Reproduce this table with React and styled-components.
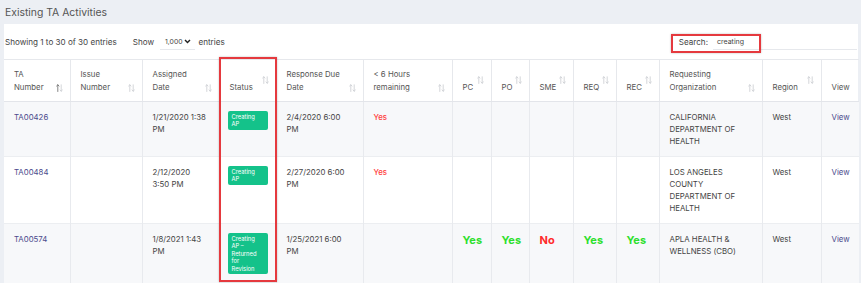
import React from 'react';
import styled, { createGlobalStyle } from 'styled-components';

const GlobalStyle = createGlobalStyle`
  html, body {
    margin: 0;
    padding: 0;
    background: #eceff4;
    font-family: Inter, "Open Sans", Arial, sans-serif;
    color: #444;
  }
`;

const Page = styled.div`
  width: 861px;
  height: 283px;
  overflow: hidden;
  background: #eceff4;
`;

const TitleBar = styled.div`
  height: 24px;
  padding-left: 5px;
  display: flex;
  align-items: center;
  font-size: 10.4px;
  color: #555;
`;

const Card = styled.div`
  margin-left: 4px;
  width: 854px;
  background: #fff;
`;

const Controls = styled.div`
  height: 35px;
  display: flex;
  align-items: center;
  padding: 0 1px;
  font-size: 8.1px;
  color: #444;
`;

const Info = styled.span`
  margin-right: 16px;
`;

const Select = styled.span`
  display: inline-flex;
  align-items: center;
  gap: 2px;
  margin: 0 3px 0 6px;
  padding: 0 4px 0 5px;
  height: 16px;
  font-size: 6.8px;
  border-bottom: 1px solid #e6e8ec;
`;

const SearchArea = styled.div`
  margin-left: auto;
  position: relative;
  display: flex;
  align-items: center;
`;

const SearchLabel = styled.span`
  margin-right: 5px;
`;

const SearchInput = styled.span`
  width: 140px;
  height: 15px;
  padding-left: 4px;
  display: flex;
  align-items: center;
  font-size: 7px;
  border-bottom: 1px solid #e6e8ec;
`;

const RedBox = styled.div`
  position: absolute;
  border: 2px solid #e5393e;
  box-shadow: 0 0 2px rgba(0, 0, 0, 0.25);
  pointer-events: none;
`;

const TableWrap = styled.div`
  position: relative;
`;

const Table = styled.table`
  width: 855px;
  table-layout: fixed;
  border-collapse: collapse;
  font-size: 7.8px;
`;

const Th = styled.th`
  height: 26px;
  padding: 8px 8px 7px 10px;
  vertical-align: bottom;
  text-align: left;
  font-weight: 400;
  line-height: 13px;
  color: #555;
  border-top: 1px solid #e6e8ec;
  border-bottom: 1px solid #e3e5ea;
  border-left: 1px solid #e6e8ec;
  &:first-child {
    border-left: none;
  }
`;

const HeadInner = styled.div`
  display: flex;
  justify-content: space-between;
  align-items: flex-end;
`;

const SortWrap = styled.span`
  display: flex;
  margin-right: -1px;
  margin-bottom: ${p => (p.$lifted ? '10px' : '2px')};
`;

const Tr = styled.tr`
  background: ${p => (p.$striped ? '#f7f8fa' : '#fff')};
`;

const Td = styled.td`
  padding: 9px 8px 9px 10px;
  vertical-align: top;
  line-height: 12px;
  color: #444;
  border-top: 1px solid #eceef1;
  border-left: 1px solid #e8eaee;
  &:first-child {
    border-left: none;
  }
`;

const Link = styled.span`
  color: #4b4a8c;
`;

const Flag = styled.span`
  display: block;
  color: ${p => (p.$ok ? '#2ee02e' : '#ff2a2a')};
  font-weight: 700;
  font-size: 11px;
  line-height: 14px;
`;

const Urgent = styled.span`
  color: #ff3c3c;
  font-weight: 500;
`;

const Badge = styled.span`
  display: block;
  width: 32px;
  margin-left: -2px;
  padding: 2px 4px;
  border-radius: 2px;
  background: #14c28a;
  color: #fff;
  font-size: 5.8px;
  line-height: 7.4px;
`;

const widths = [66, 72, 77, 57, 87, 89, 39, 38, 44, 43, 43, 103, 59, 38];

const headers = [
  { label: <>TA<br />Number</>, active: true },
  { label: <>Issue<br />Number</> },
  { label: <>Assigned<br />Date</> },
  { label: 'Status', lifted: true },
  { label: <>Response Due<br />Date</> },
  { label: <>&lt; 6 Hours<br />remaining</> },
  { label: 'PC', lifted: true },
  { label: 'PO', lifted: true },
  { label: 'SME', lifted: true },
  { label: 'REQ', lifted: true },
  { label: 'REC', lifted: true },
  { label: <>Requesting<br />Organization</> },
  { label: 'Region', lifted: true },
  { label: 'View', noSort: true },
];

const rows = [
  {
    id: 'TA00426',
    assigned: <>1/21/2020 1:38<br />PM</>,
    status: <>Creating<br />AP</>,
    due: <>2/4/2020 6:00<br />PM</>,
    urgent: true,
    flags: null,
    org: <>CALIFORNIA<br />DEPARTMENT OF<br />HEALTH</>,
  },
  {
    id: 'TA00484',
    assigned: <>2/12/2020<br />3:50 PM</>,
    status: <>Creating<br />AP</>,
    due: <>2/27/2020 6:00<br />PM</>,
    urgent: true,
    flags: null,
    org: <>LOS ANGELES<br />COUNTY<br />DEPARTMENT OF<br />HEALTH</>,
  },
  {
    id: 'TA00574',
    assigned: <>1/8/2021 1:43<br />PM</>,
    status: <>Creating<br />AP –<br />Returned<br />for<br />Revision</>,
    due: <>1/25/2021 6:00<br />PM</>,
    urgent: false,
    flags: [true, true, false, true, true],
    org: <>APLA HEALTH &amp;<br />WELLNESS (CBO)</>,
  },
];

function SortIcon({ active }) {
  return (
    <svg width="7" height="8" viewBox="0 0 7 8">
      <g fill="none" strokeWidth="0.8" strokeLinecap="round" strokeLinejoin="round">
        <path d="M1.8 7.5V0.8M0.6 2L1.8 0.8L3 2" stroke={active ? '#666' : '#c9ccd1'} />
        <path d="M5.2 0.8V7.2M4 6L5.2 7.2L6.4 6" stroke="#c9ccd1" />
      </g>
    </svg>
  );
}

function Chevron() {
  return (
    <svg width="7" height="5" viewBox="0 0 7 5">
      <path d="M1 1L3.5 3.6L6 1" fill="none" stroke="#222" strokeWidth="1.4" />
    </svg>
  );
}

export default function App() {
  return (
    <Page>
      <GlobalStyle />
      <TitleBar>Existing TA Activities</TitleBar>
      <Card>
        <Controls>
          <Info>Showing 1 to 30 of 30 entries</Info>
          <span>Show</span>
          <Select>1,000 <Chevron /></Select>
          <span>entries</span>
          <SearchArea>
            <SearchLabel>Search:</SearchLabel>
            <SearchInput>creating</SearchInput>
            <RedBox style={{ left: -8, top: 0, width: 86, height: 15 }} />
          </SearchArea>
        </Controls>
        <TableWrap>
          <Table>
            <colgroup>
              {widths.map((w, i) => <col key={i} style={{ width: w }} />)}
            </colgroup>
            <thead>
              <tr>
                {headers.map((h, i) => (
                  <Th key={i}>
                    <HeadInner>
                      <span>{h.label}</span>
                      {!h.noSort && (
                        <SortWrap $lifted={h.lifted}>
                          <SortIcon active={h.active} />
                        </SortWrap>
                      )}
                    </HeadInner>
                  </Th>
                ))}
              </tr>
            </thead>
            <tbody>
              {rows.map((r, i) => (
                <Tr key={r.id} $striped={i % 2 === 0}>
                  <Td><Link>{r.id}</Link></Td>
                  <Td />
                  <Td>{r.assigned}</Td>
                  <Td><Badge>{r.status}</Badge></Td>
                  <Td>{r.due}</Td>
                  <Td>{r.urgent && <Urgent>Yes</Urgent>}</Td>
                  {[0, 1, 2, 3, 4].map(k => (
                    <Td key={k}>
                      {r.flags && <Flag $ok={r.flags[k]}>{r.flags[k] ? 'Yes' : 'No'}</Flag>}
                    </Td>
                  ))}
                  <Td>{r.org}</Td>
                  <Td>West</Td>
                  <Td><Link>View</Link></Td>
                </Tr>
              ))}
            </tbody>
          </Table>
          <RedBox style={{ left: 215, top: -2, width: 54, height: 221 }} />
        </TableWrap>
      </Card>
    </Page>
  );
}
